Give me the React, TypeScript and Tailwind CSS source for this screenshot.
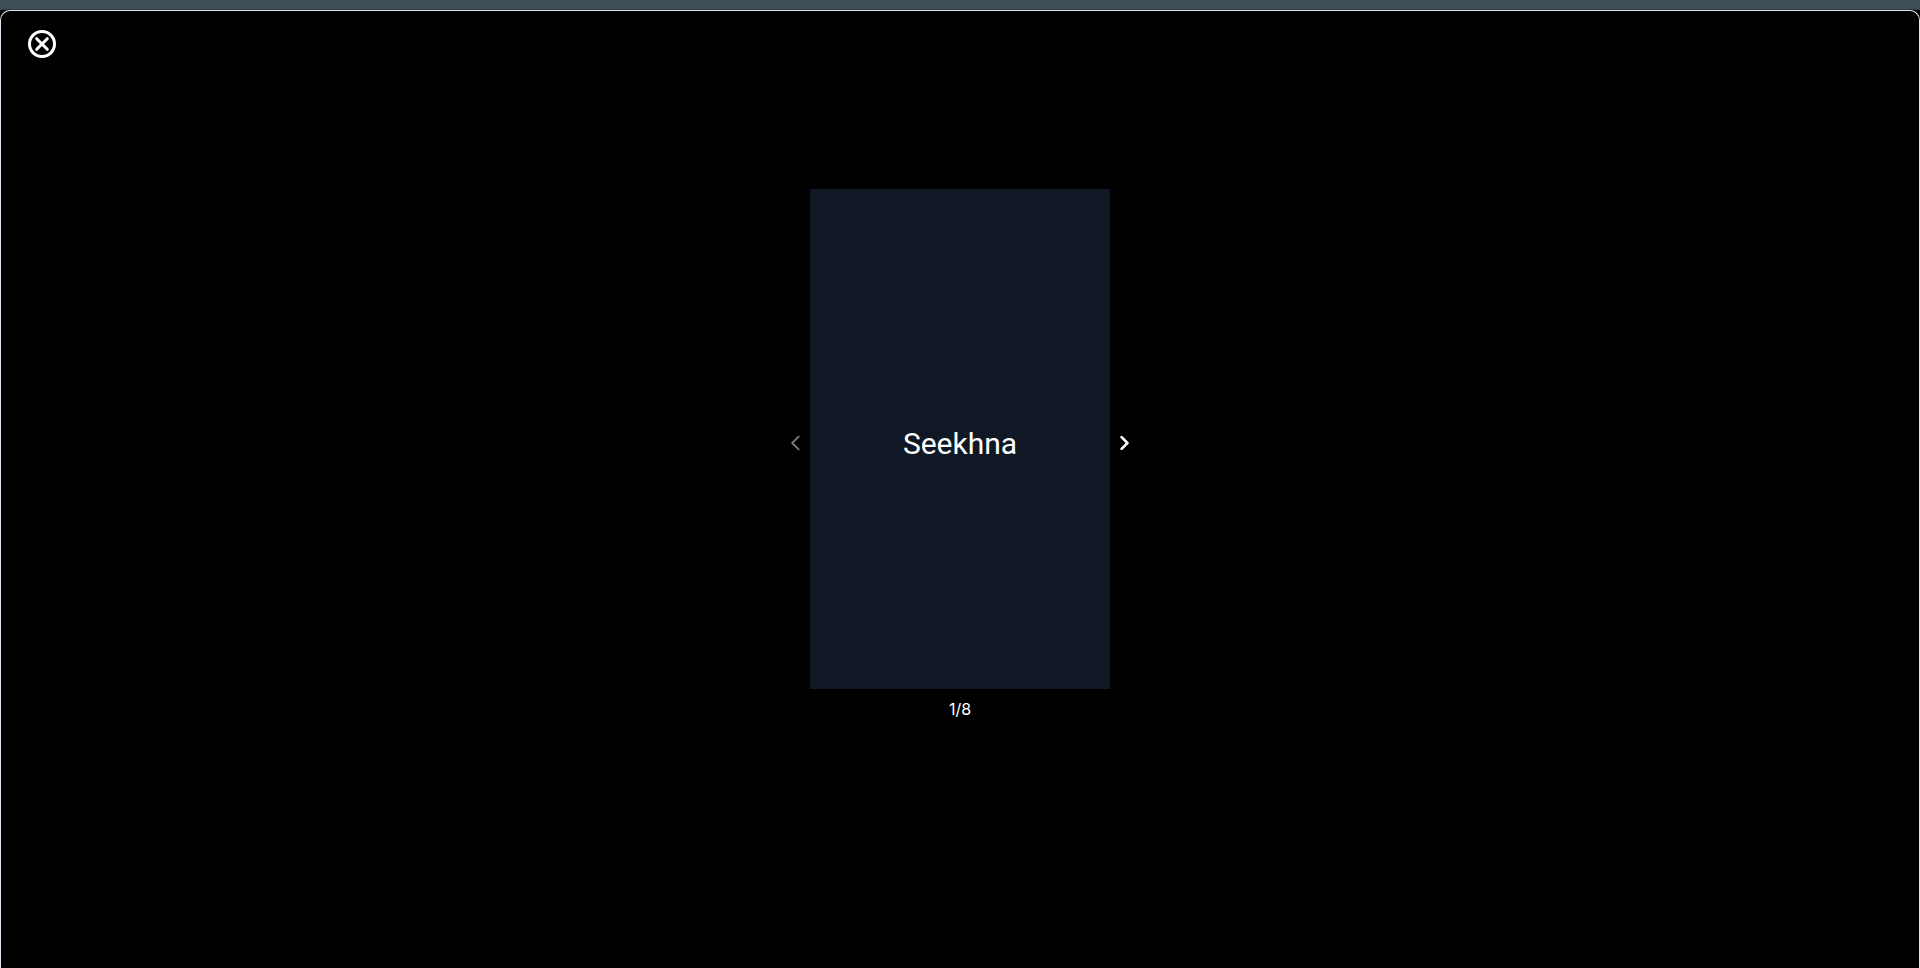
import { useState } from "react";

const slides = ["Seekhna", "Slide 2", "Slide 3", "Slide 4", "Slide 5", "Slide 6", "Slide 7", "Slide 8"];

function CloseIcon() {
  return (
    <svg viewBox="0 0 28 28" className="size-7" fill="none" stroke="currentColor" strokeWidth="3" strokeLinecap="round" aria-hidden="true">
      <circle cx="14" cy="14" r="12.5" />
      <path d="M8.7 8.7 19.3 19.3M19.3 8.7 8.7 19.3" />
    </svg>
  );
}

function Chevron({ direction }: { direction: "left" | "right" }) {
  const left = direction === "left";
  return (
    <svg
      viewBox="0 0 10 16"
      className="h-4 w-2.5"
      fill="none"
      stroke="currentColor"
      strokeWidth={left ? 2 : 2.6}
      strokeLinecap="round"
      strokeLinejoin="round"
      aria-hidden="true"
    >
      <path d={left ? "M8.6 1.6 2.2 8 8.6 14.4" : "M1.6 2.2 7.4 8 1.6 13.8"} />
    </svg>
  );
}

export default function App() {
  const [index, setIndex] = useState(0);

  return (
    <div className="flex min-h-screen flex-col bg-black font-['Inter',sans-serif] text-white">
      <div className="h-2.5 border-b border-[#343b40] bg-[#3c4f57]" />
      <main className="flex grow flex-col rounded-t-[10px] border border-b-0 border-[#dbe6f2] bg-black">
        <header className="flex px-[27px] pt-[19px]">
          <button type="button" aria-label="Close" className="flex">
            <CloseIcon />
          </button>
        </header>
        <section className="flex flex-col items-center pt-[131px]">
          <div className="flex items-center">
            <button
              type="button"
              aria-label="Previous"
              disabled={index === 0}
              onClick={() => setIndex(index - 1)}
              className="flex h-8 items-center pr-2.5 pt-2 disabled:text-[#777777]"
            >
              <Chevron direction="left" />
            </button>
            <div className="flex h-[500px] w-[300px] items-center justify-center bg-[#101825] pt-2.5">
              <h1 className="font-['Roboto',sans-serif] text-3xl font-normal">{slides[index]}</h1>
            </div>
            <button
              type="button"
              aria-label="Next"
              disabled={index === slides.length - 1}
              onClick={() => setIndex(index + 1)}
              className="flex h-8 items-center pl-2.5 pt-2 disabled:text-[#777777]"
            >
              <Chevron direction="right" />
            </button>
          </div>
          <p className="pt-2 text-base">{`${index + 1}/${slides.length}`}</p>
        </section>
      </main>
    </div>
  );
}
